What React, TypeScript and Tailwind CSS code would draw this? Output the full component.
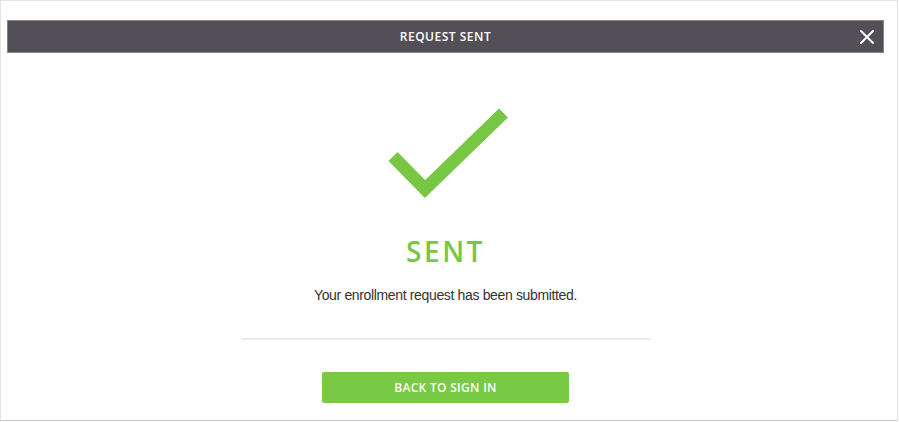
import { X } from 'lucide-react';

export default function App() {
  return (
    <div className="w-[899px] h-[422px] bg-white">
      <div className="w-[898px] h-[421px] border border-[#e4e4e4] border-b-[#c4c4c4] pl-[6px] pr-[13px] pt-[19px]">
        {/* Title bar */}
        <div className="relative h-[33px] bg-[#524f56] border border-[#86838a] flex items-center justify-center">
          <span className="text-white text-[12px] font-semibold tracking-[0.5px] [font-family:'Open_Sans',sans-serif]">
            REQUEST SENT
          </span>
          <button className="absolute right-[4px] top-1/2 -translate-y-1/2 text-white">
            <X className="w-6 h-6" strokeWidth={2} />
          </button>
        </div>

        {/* Body */}
        <div className="flex flex-col items-center">
          <svg width="125" height="96" viewBox="0 0 125 96" className="mt-[52px] ml-[1px]">
            <polyline
              points="9,51.5 41,84 119.5,8"
              fill="none"
              stroke="#77c744"
              strokeWidth="12.7"
              strokeLinecap="butt"
              strokeLinejoin="miter"
            />
          </svg>

          <h2 className="mt-[33px] h-[34px] leading-[34px] text-[28px] font-semibold tracking-[2.5px] text-[#77c744] [font-family:'Open_Sans',sans-serif]">
            SENT
          </h2>

          <p className="mt-[17px] h-[20px] leading-[20px] text-[14px] tracking-[-0.35px] text-[#333333] [font-family:'Liberation_Sans',Arial,sans-serif]">
            Your enrollment request has been submitted.
          </p>

          <div className="mt-[33px] w-[409px] h-[2px] bg-[#ebebeb]" />

          <button className="mt-[32px] w-[247px] h-[31px] rounded-[2px] bg-[#78c944] text-white text-[12px] font-semibold tracking-[0.3px] [font-family:'Open_Sans',sans-serif]">
            BACK TO SIGN IN
          </button>
        </div>
      </div>
    </div>
  );
}
